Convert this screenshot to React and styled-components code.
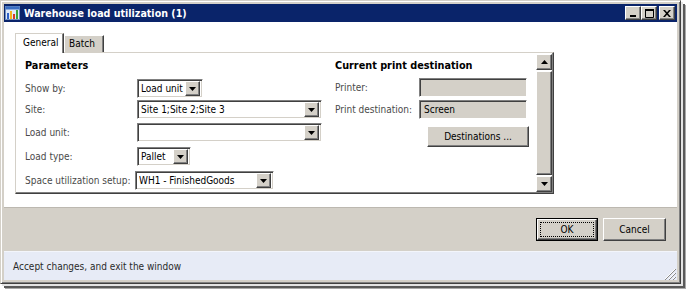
import React from 'react';
import styled, { createGlobalStyle } from 'styled-components';

const FONT = `"DejaVu Sans Condensed", "Liberation Sans", Arial, sans-serif`;

const Global = createGlobalStyle`
  html, body { margin: 0; padding: 0; background: #fff; }
  body { width: 687px; height: 291px; overflow: hidden; font-family: ${FONT}; font-size: 10px; color: #000; }
  * { box-sizing: border-box; }
`;

const raised = `
  background: #d4d0c8;
  border: 1px solid;
  border-color: #fff #404040 #404040 #fff;
  box-shadow: inset -1px -1px #808080, inset 1px 1px #d4d0c8;
`;

const Win = styled.div`
  width: 681px;
  height: 284px;
  background: #d4d0c8;
  border: 1px solid;
  border-color: #d4d0c8 #404040 #404040 #d4d0c8;
  box-shadow: inset 1px 1px #fff, inset -1px -1px #808080, 2px 2px 0 #e4e4e4, 4px 4px 0 #5a5a5a, 5px 5px 0 #aaa;
  padding: 3px;
  display: flex;
  flex-direction: column;
`;

const TitleBar = styled.div`
  height: 18px;
  background: #0a246a;
  display: flex;
  align-items: center;
  padding: 0 2px 0 1px;
  gap: 3px;
`;

const TitleText = styled.div`
  flex: 1;
  color: #fff;
  font-weight: bold;
  font-size: 10.6px;
  white-space: nowrap;
`;

const CaptionButtons = styled.div`
  display: flex;
  align-items: center;
`;

const CaptionButton = styled.div`
  ${raised}
  width: 16px;
  height: 14px;
  margin-left: ${p => p.$gap || 0}px;
  display: flex;
  align-items: center;
  justify-content: center;
  svg { display: block; }
`;

const Body = styled.div`
  height: 185px;
  background: #fff;
  padding: 11px 0 0 11px;
`;

const TabControl = styled.div`
  width: 539px;
  display: flex;
  flex-direction: column;
`;

const TabStrip = styled.div`
  height: 19px;
  display: flex;
  align-items: flex-end;
`;

const Tab = styled.div`
  position: relative;
  z-index: ${p => (p.$active ? 2 : 1)};
  width: ${p => p.$w}px;
  height: ${p => (p.$active ? 20 : 17)}px;
  margin-bottom: ${p => (p.$active ? -1 : 0)}px;
  background: ${p => (p.$active ? '#fff' : '#d4d0c8')};
  border-top: 1px solid ${p => (p.$active ? '#d4d0c8' : '#fff')};
  border-left: 1px solid ${p => (p.$active ? '#d4d0c8' : '#fff')};
  border-right: 1px solid #404040;
  box-shadow: inset -1px 0 #808080;
  padding-left: ${p => p.$pad}px;
  padding-top: ${p => (p.$active ? 3 : 2)}px;
  font-size: 10px;
  color: #000;
`;

const Panel = styled.div`
  height: 142px;
  border: 1px solid;
  border-color: #d4d0c8 #404040 #404040 #d4d0c8;
  box-shadow: inset -1px -1px #808080;
  display: flex;
`;

const Content = styled.div`
  flex: 1;
  display: flex;
  padding-left: 9px;
`;

const Section = styled.div`
  width: ${p => p.$w}px;
  padding-top: 6px;
  display: flex;
  flex-direction: column;
`;

const Heading = styled.div`
  height: 14px;
  line-height: 14px;
  font-weight: bold;
  font-size: 10.8px;
  color: #000;
  white-space: nowrap;
`;

const Row = styled.div`
  display: flex;
  align-items: center;
  height: ${p => p.$h || 19}px;
  margin-top: ${p => p.$mt}px;
`;

const Label = styled.div`
  width: ${p => p.$w}px;
  flex: none;
  color: #4a4a4a;
  white-space: nowrap;
`;

const sunken = `
  border: 1px solid;
  border-color: #808080 #fff #fff #808080;
  box-shadow: inset 1px 1px #404040, inset -1px -1px #d4d0c8;
`;

const Combo = styled.div`
  ${sunken}
  width: ${p => p.$w}px;
  height: 19px;
  margin-left: ${p => p.$shift || 0}px;
  background: #fff;
  display: flex;
  align-items: center;
  padding: 2px 2px 2px 3px;
`;

const ComboText = styled.div`
  flex: 1;
  color: #000;
  white-space: nowrap;
  overflow: hidden;
`;

const ArrowButton = styled.div`
  ${raised}
  width: 15px;
  height: 15px;
  flex: none;
  display: flex;
  align-items: center;
  justify-content: center;
  svg { display: block; }
`;

const Field = styled.div`
  ${sunken}
  width: 108px;
  height: ${p => p.$h || 19}px;
  background: #d4d0c8;
  display: flex;
  align-items: center;
  padding-left: 4px;
  color: #000;
`;

const PushButton = styled.div`
  ${raised}
  width: ${p => p.$w}px;
  height: ${p => p.$h}px;
  margin-left: ${p => p.$ml || 0}px;
  display: flex;
  align-items: center;
  justify-content: center;
  font-size: 10px;
  color: #000;
`;

const DefaultButton = styled.div`
  width: ${p => p.$w}px;
  height: ${p => p.$h}px;
  border: 1px solid #000;
  display: flex;
`;

const DefaultInner = styled.div`
  ${raised}
  flex: 1;
  display: flex;
  align-items: center;
  justify-content: center;
  padding: 2px;
`;

const FocusRect = styled.div`
  width: 100%;
  height: 100%;
  border: 1px dotted #000;
  display: flex;
  align-items: center;
  justify-content: center;
  font-size: 10px;
  color: #000;
`;

const Scrollbar = styled.div`
  width: 16px;
  margin: 1px 1px 1px 0;
  display: flex;
  flex-direction: column;
  gap: 1px;
`;

const ScrollButton = styled.div`
  ${raised}
  width: 16px;
  height: 16px;
  flex: none;
  display: flex;
  align-items: center;
  justify-content: center;
  svg { display: block; }
`;

const Thumb = styled.div`
  ${raised}
  flex: 1;
`;

const ButtonBand = styled.div`
  height: 44px;
  border-top: 1px solid #bcb8b0;
  background: #d4d0c8;
  display: flex;
  align-items: center;
  justify-content: flex-end;
  padding-right: 11px;
  gap: 5px;
`;

const StatusBar = styled.div`
  height: 29px;
  background: #e7ebf6;
  border-top: 1px solid #f3f5fb;
  display: flex;
  align-items: center;
  padding-left: 9px;
  color: #2a2a2a;
  font-size: 10px;
  position: relative;
`;

const StatusText = styled.div`
  flex: 1;
`;

const Grip = styled.svg`
  position: absolute;
  right: 1px;
  bottom: 0;
`;

const Down = () => (
  <svg width="7" height="4" viewBox="0 0 7 4"><path d="M0 0h7L3.5 4z" fill="#000" /></svg>
);
const Up = () => (
  <svg width="7" height="4" viewBox="0 0 7 4"><path d="M0 4h7L3.5 0z" fill="#000" /></svg>
);

const AppIcon = () => (
  <svg width="16" height="16" viewBox="0 0 16 16">
    <rect x="0.5" y="1.5" width="14" height="13" fill="#dfe9f7" stroke="#6f8fc0" />
    <rect x="0.5" y="1.5" width="14" height="3" fill="#3b6fc4" />
    <rect x="2" y="8" width="2" height="6" fill="#2f62c8" />
    <rect x="5" y="6" width="2" height="8" fill="#f2b21a" />
    <rect x="8" y="9" width="2" height="5" fill="#d63b2b" />
    <rect x="11" y="5" width="2" height="9" fill="#3aa33a" />
  </svg>
);

const Combobox = ({ w, text, shift }) => (
  <Combo $w={w} $shift={shift}>
    <ComboText>{text}</ComboText>
    <ArrowButton><Down /></ArrowButton>
  </Combo>
);

export default function App() {
  return (
    <>
      <Global />
      <Win>
        <TitleBar>
          <AppIcon />
          <TitleText>Warehouse load utilization (1)</TitleText>
          <CaptionButtons>
            <CaptionButton>
              <svg width="8" height="8" viewBox="0 0 8 8"><rect x="1" y="6" width="6" height="2" fill="#000" /></svg>
            </CaptionButton>
            <CaptionButton>
              <svg width="9" height="9" viewBox="0 0 9 9"><path d="M0.5 0.5h8v8h-8z" fill="none" stroke="#000" /><rect x="0" y="0" width="9" height="2" fill="#000" /></svg>
            </CaptionButton>
            <CaptionButton $gap={2}>
              <svg width="8" height="7" viewBox="0 0 8 7"><path d="M0 0h2l2 2.2L6 0h2L5 3.5 8 7H6L4 4.8 2 7H0l3-3.5z" fill="#000" /></svg>
            </CaptionButton>
          </CaptionButtons>
        </TitleBar>

        <Body>
          <TabControl>
            <TabStrip>
              <Tab $active $w={49} $pad={7}>General</Tab>
              <Tab $w={40} $pad={4}>Batch</Tab>
            </TabStrip>
            <Panel>
              <Content>
                <Section $w={310}>
                  <Heading>Parameters</Heading>
                  <Row $mt={6}>
                    <Label $w={112}>Show by:</Label>
                    <Combobox w={66} text="Load unit" />
                  </Row>
                  <Row $mt={2}>
                    <Label $w={112}>Site:</Label>
                    <Combobox w={185} text="Site 1;Site 2;Site 3" />
                  </Row>
                  <Row $mt={4}>
                    <Label $w={112}>Load unit:</Label>
                    <Combobox w={185} text="" />
                  </Row>
                  <Row $mt={5}>
                    <Label $w={112}>Load type:</Label>
                    <Combobox w={54} text="Pallet" />
                  </Row>
                  <Row $mt={5}>
                    <Label $w={110}>Space utilization setup:</Label>
                    <Combobox w={139} text="WH1 - FinishedGoods" />
                  </Row>
                </Section>
                <Section $w={200}>
                  <Heading>Current print destination</Heading>
                  <Row $mt={5}>
                    <Label $w={84}>Printer:</Label>
                    <Field />
                  </Row>
                  <Row $mt={3}>
                    <Label $w={84}>Print destination:</Label>
                    <Field>Screen</Field>
                  </Row>
                  <Row $mt={7} $h={21}>
                    <PushButton $w={102} $h={21} $ml={92}>Destinations ...</PushButton>
                  </Row>
                </Section>
              </Content>
              <Scrollbar>
                <ScrollButton><Up /></ScrollButton>
                <Thumb />
                <ScrollButton><Down /></ScrollButton>
              </Scrollbar>
            </Panel>
          </TabControl>
        </Body>

        <ButtonBand>
          <DefaultButton $w={62} $h={23}>
            <DefaultInner><FocusRect>OK</FocusRect></DefaultInner>
          </DefaultButton>
          <PushButton $w={63} $h={23}>Cancel</PushButton>
        </ButtonBand>

        <StatusBar>
          <StatusText>Accept changes, and exit the window</StatusText>
          <Grip width="12" height="12" viewBox="0 0 12 12">
            <path d="M11 1L1 11M11 5L5 11M11 9L9 11" stroke="#fff" strokeWidth="1" />
            <path d="M12 1L1 12M12 5L5 12M12 9L9 12" stroke="#8a8a8a" strokeWidth="1" />
          </Grip>
        </StatusBar>
      </Win>
    </>
  );
}
